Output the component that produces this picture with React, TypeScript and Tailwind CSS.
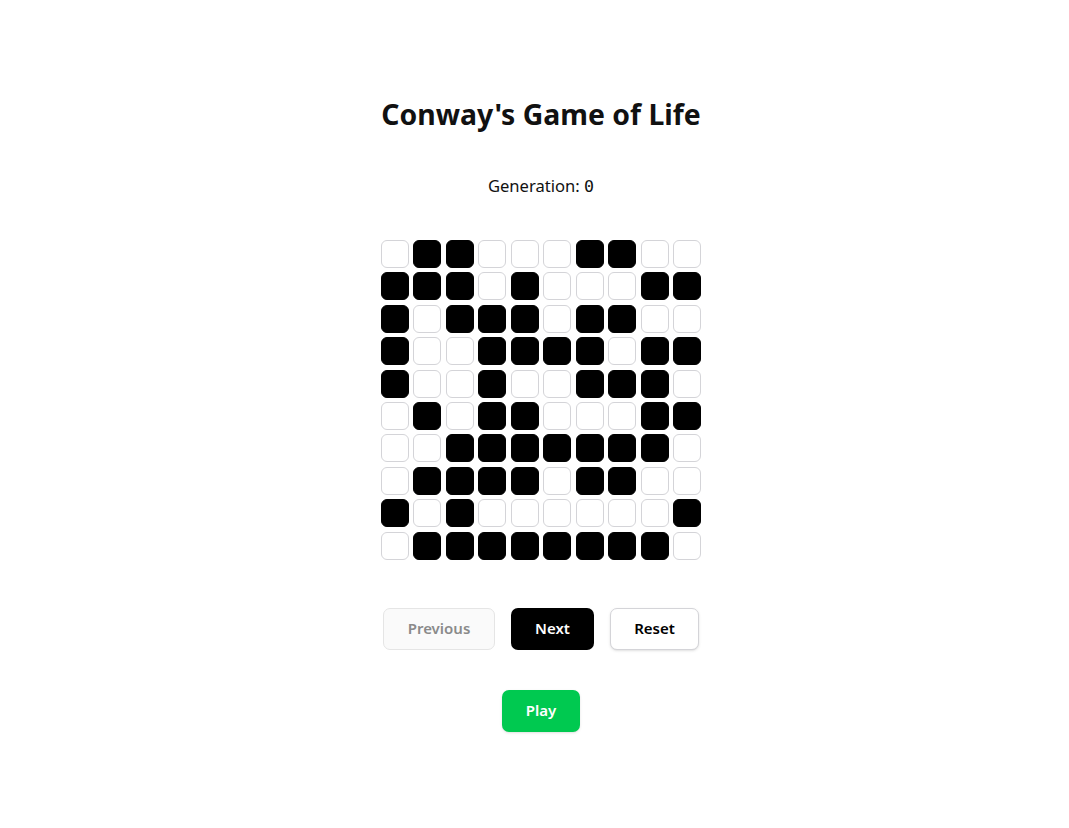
import React from "react";

const grid = [
  "0110001100",
  "1110100011",
  "1011101100",
  "1001111011",
  "1001001110",
  "0101100011",
  "0011111110",
  "0111101100",
  "1010000001",
  "0111111110",
];

export default function App() {
  return (
    <div
      className="min-h-[828px] bg-white flex flex-col items-center pl-[13px] text-[#111]"
      style={{ fontFamily: '"Noto Sans", "Open Sans", sans-serif' }}
    >
      <h1 className="mt-[94px] text-[28.4px] leading-[40px] font-bold">Conway's Game of Life</h1>
      <div className="mt-[40px] text-[16.6px] leading-[24px]">
        Generation: <span style={{ fontFamily: '"DejaVu Sans Mono", monospace' }}>0</span>
      </div>
      <div className="mt-[41px] grid grid-cols-10 gap-x-[4.4px] gap-y-[4.4px] w-[320px]">
        {grid.flatMap((row, r) =>
          row.split("").map((c, i) => (
            <div
              key={`${r}-${i}`}
              className={
                c === "1"
                  ? "h-[28px] rounded-[6px] bg-black border border-black"
                  : "h-[28px] rounded-[6px] bg-white border border-[#d4d4d8]"
              }
            />
          ))
        )}
      </div>
      <div className="mt-[48px] flex gap-4">
        <button className="h-[42px] w-[112px] rounded-[7px] border border-[#e5e5e5] bg-[#fafafa] text-[15px] font-semibold text-[#8a8a8a]">
          Previous
        </button>
        <button className="h-[42px] w-[83px] rounded-[7px] bg-black text-[15px] font-semibold text-white">
          Next
        </button>
        <button className="h-[42px] w-[89px] rounded-[7px] border border-[#d4d4d8] bg-white text-[15px] font-semibold text-black shadow-sm">
          Reset
        </button>
      </div>
      <button className="mt-[40px] h-[42px] w-[78px] rounded-[7px] bg-[#00c950] text-[15px] font-semibold text-white shadow-sm">
        Play
      </button>
    </div>
  );
}
